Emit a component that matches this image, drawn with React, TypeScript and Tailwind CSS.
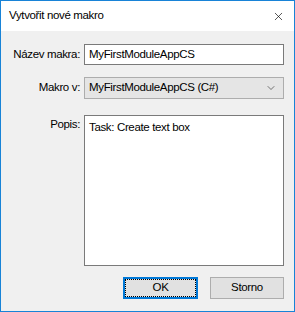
import { X, ChevronDown } from 'lucide-react';

const font = { fontFamily: '"Liberation Sans", Arial, sans-serif' };

export default function App() {
  return (
    <div
      className="flex h-[312px] w-[295px] flex-col border border-[#1883d7] bg-[#f0f0f0] text-[11.5px] tracking-[-0.35px] text-black"
      style={font}
    >
      {/* Title bar */}
      <div className="flex h-[30px] items-center justify-between bg-white pl-[8px] pr-[9px]">
        <span>Vytvořit nové makro</span>
        <X size={13} strokeWidth={1.2} className="text-black" />
      </div>

      {/* Form */}
      <div className="flex flex-1 flex-col pt-[13px] pr-[9px]">
        <div className="flex items-center gap-[4px]">
          <label className="w-[79px] text-right">Název makra:</label>
          <div className="flex h-[21px] w-[200px] items-center border border-[#7a7a7a] bg-white px-[4px]">
            MyFirstModuleAppCS
          </div>
        </div>

        <div className="mt-[12px] flex items-center gap-[4px]">
          <label className="w-[79px] text-right">Makro v:</label>
          <div className="flex h-[22px] w-[200px] items-center justify-between border border-[#adadad] bg-[#e5e5e5] pl-[4px] pr-[6px]">
            <span>MyFirstModuleAppCS (C#)</span>
            <ChevronDown size={12} strokeWidth={1.3} className="text-[#333]" />
          </div>
        </div>

        <div className="mt-[16px] flex items-start gap-[4px]">
          <label className="w-[79px] pt-[1px] text-right">Popis:</label>
          <div className="h-[151px] w-[200px] border border-[#7a7a7a] bg-white px-[4px] pt-[3px]">
            Task: Create text box
          </div>
        </div>

        <div className="mt-[11px] flex justify-end gap-[12px] pr-[1px]">
          <button className="relative h-[22px] w-[75px] border-2 border-[#0078d7] bg-[#e1e1e1]">
            <span className="absolute inset-0 border border-dotted border-black" />
            OK
          </button>
          <button className="h-[22px] w-[74px] border border-[#adadad] bg-[#e1e1e1]">Storno</button>
        </div>
      </div>
    </div>
  );
}
